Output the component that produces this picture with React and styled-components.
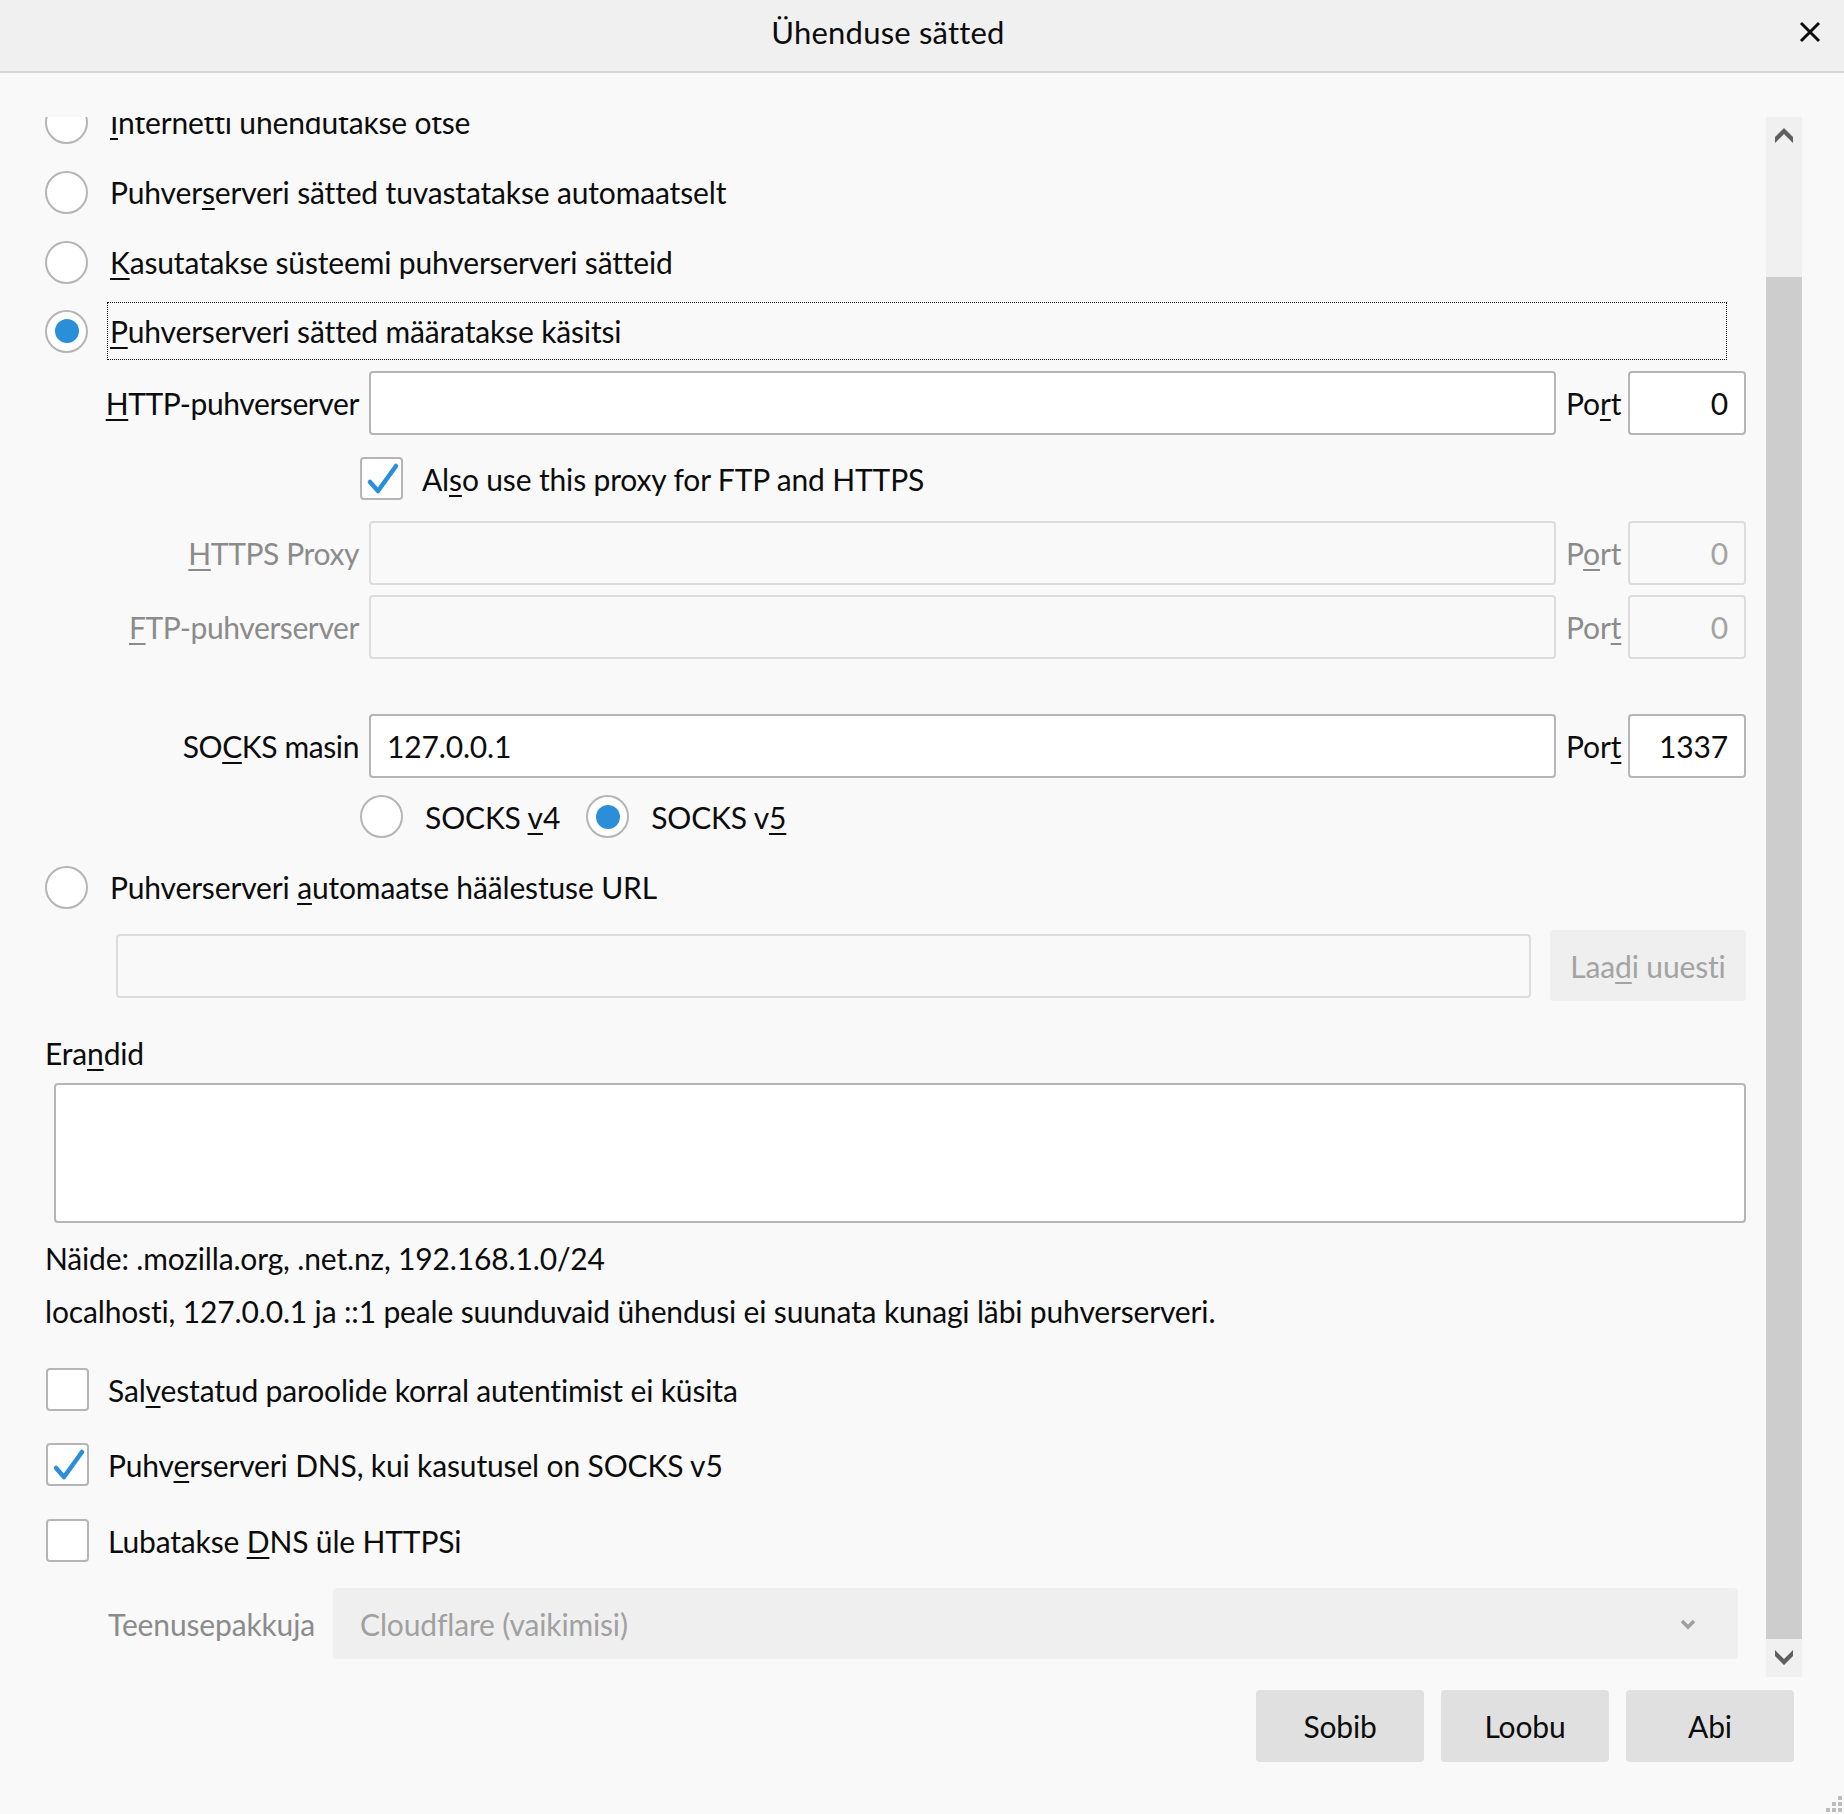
import React, { useLayoutEffect, useRef } from "react";
import styled, { createGlobalStyle } from "styled-components";

const GlobalStyle = createGlobalStyle`
  html, body {
    margin: 0;
    padding: 0;
    background: #f9f9f9;
  }
  body {
    font-family: "Lato", "Liberation Sans", sans-serif;
    color: #0c0c0d;
    letter-spacing: -0.15px;
  }
  u {
    text-decoration-thickness: 2px;
    text-underline-offset: 4px;
  }
`;

const Dialog = styled.div`
  width: 1844px;
  height: 1814px;
  display: flex;
  flex-direction: column;
  background: #f9f9f9;
  position: relative;
  overflow: hidden;
  font-size: 30px;
`;

const Header = styled.div`
  height: 73px;
  box-sizing: border-box;
  padding-bottom: 8px;
  flex: 0 0 auto;
  display: flex;
  align-items: center;
  background: #f0f0f0;
  border-bottom: 2px solid #d7d7db;
`;

const Title = styled.div`
  flex: 1;
  text-align: center;
  font-size: 31px;
  letter-spacing: 0.2px;
  color: #0c0c0d;
`;

const CloseButton = styled.div`
  width: 68px;
  display: flex;
  align-items: center;
  justify-content: center;
`;

const Body = styled.div`
  margin-top: 44px;
  height: 1560px;
  display: flex;
  padding-right: 42px;
`;

const Viewport = styled.div`
  flex: 1;
  overflow: hidden;
`;

const Content = styled.div`
  padding: 0 20px 40px 45px;
  display: flex;
  flex-direction: column;
`;

const ScrollBar = styled.div`
  width: 36px;
  display: flex;
  flex-direction: column;
  background: #f0f0f0;
`;

const ScrollTop = styled.div`
  height: 160px;
  display: flex;
  justify-content: center;
  padding-top: 10px;
  box-sizing: border-box;
`;

const Thumb = styled.div`
  flex: 1;
  background: #cdcdcd;
`;

const ScrollBottom = styled.div`
  height: 38px;
  display: flex;
  justify-content: center;
  align-items: center;
`;

const RadioRow = styled.div`
  display: flex;
  align-items: center;
  height: 58px;
  margin-top: ${(p) => p.$mt || 0}px;
`;

const RadioCircle = styled.span`
  width: 43px;
  height: 43px;
  flex: 0 0 43px;
  box-sizing: border-box;
  border-radius: 50%;
  border: 2px solid #b5b5b5;
  background: #fff;
  display: flex;
  align-items: center;
  justify-content: center;
  &::after {
    content: "";
    display: ${(p) => (p.$checked ? "block" : "none")};
    width: 24px;
    height: 24px;
    border-radius: 50%;
    background: #2a8fd8;
  }
`;

const RadioLabel = styled.span`
  margin-left: 19px;
  height: 58px;
  box-sizing: border-box;
  display: flex;
  align-items: center;
  padding: 0 2px;
  border: 1px dotted ${(p) => (p.$focused ? "#0c0c0d" : "transparent")};
  flex: ${(p) => (p.$focused ? 1 : "0 0 auto")};
  margin-right: ${(p) => (p.$focused ? 19 : 0)}px;
  white-space: nowrap;
`;

const ProxyGrid = styled.div`
  display: grid;
  grid-template-columns: 252px 1fr 52px 118px;
  column-gap: 10px;
  align-items: center;
  height: 64px;
  margin-left: 62px;
  margin-top: ${(p) => p.$mt || 0}px;
`;

const FieldLabel = styled.label`
  display: flex;
  justify-content: ${(p) => (p.$left ? "flex-start" : "flex-end")};
  letter-spacing: ${(p) => (p.$left ? "-0.15px" : "-0.4px")};
  white-space: nowrap;
  color: ${(p) => (p.$disabled ? "#8b8b8c" : "#0c0c0d")};
`;

const TextInput = styled.input`
  height: 64px;
  width: 100%;
  box-sizing: border-box;
  border: 2px solid ${(p) => (p.disabled ? "#dcdcdc" : "#b5b5b5")};
  border-radius: 4px;
  background: ${(p) => (p.disabled ? "#f9f9f9" : "#ffffff")};
  padding: 0 16px;
  font-family: "Lato", "Liberation Sans", sans-serif;
  font-size: 30px;
  letter-spacing: -0.15px;
  color: #0c0c0d;
  text-align: ${(p) => (p.$right ? "right" : "left")};
  outline: none;
  margin: 0;
  &:disabled {
    color: #a3a3a3;
    -webkit-text-fill-color: #a3a3a3;
  }
`;

const CheckRow = styled.div`
  display: flex;
  align-items: center;
  height: 43px;
  margin-top: ${(p) => p.$mt || 0}px;
  margin-left: ${(p) => p.$ml || 0}px;
  white-space: nowrap;
`;

const CheckBox = styled.span`
  width: 43px;
  height: 43px;
  flex: 0 0 43px;
  box-sizing: border-box;
  border: 2px solid #b5b5b5;
  border-radius: 4px;
  background: #fff;
  margin-right: 19px;
  display: flex;
`;

const SocksRow = styled.div`
  display: flex;
  align-items: center;
  gap: 26px;
  height: 43px;
  margin-top: 17px;
  margin-left: 315px;
`;

const SocksOption = styled.span`
  display: flex;
  align-items: center;
  gap: 22px;
  white-space: nowrap;
`;

const UrlRow = styled.div`
  display: flex;
  align-items: center;
  gap: 19px;
  height: 71px;
  margin-top: 14px;
  margin-left: 71px;
`;

const ReloadButton = styled.div`
  width: 196px;
  height: 71px;
  flex: 0 0 196px;
  border-radius: 4px;
  background: #efefef;
  color: #a3a3a3;
  display: flex;
  align-items: center;
  justify-content: center;
`;

const TextLine = styled.div`
  height: 40px;
  display: flex;
  align-items: center;
  margin-top: ${(p) => p.$mt || 0}px;
  white-space: nowrap;
`;

const TextArea = styled.div`
  height: 140px;
  margin-top: 10px;
  margin-left: 9px;
  box-sizing: border-box;
  border: 2px solid #b5b5b5;
  border-radius: 4px;
  background: #fff;
`;

const SelectRow = styled.div`
  display: grid;
  grid-template-columns: 225px 1fr;
  align-items: center;
  height: 71px;
  margin-top: 26px;
  margin-left: 63px;
  margin-right: 8px;
`;

const SelectBox = styled.div`
  height: 71px;
  border-radius: 4px;
  background: #efefef;
  color: #a0a0a0;
  display: flex;
  align-items: center;
  justify-content: space-between;
  padding: 0 42px 0 27px;
`;

const Footer = styled.div`
  display: flex;
  justify-content: flex-end;
  gap: 17px;
  margin-top: 13px;
  padding-right: 50px;
`;

const Button = styled.div`
  width: 168px;
  height: 72px;
  border-radius: 4px;
  background: #e0e0e0;
  display: flex;
  align-items: center;
  justify-content: center;
  font-size: 30px;
`;

const Grip = styled.svg`
  position: absolute;
  right: 0;
  bottom: 0;
`;

const Check = () => (
  <svg width="39" height="39" viewBox="0 0 39 39">
    <polyline
      points="8,23 16,32 34,7"
      fill="none"
      stroke="#2a8fd8"
      strokeWidth="4.5"
      strokeLinecap="round"
      strokeLinejoin="round"
    />
  </svg>
);

const ScrollArrow = ({ up }) => (
  <svg width="18" height="16" viewBox="0 0 18 16">
    <polygon
      points={up ? "0,10 9,1 18,10 18,16 9,7 0,16" : "0,0 9,9 18,0 18,6 9,15 0,6"}
      fill="#5f5f5f"
    />
  </svg>
);

const SelectArrow = () => (
  <svg width="16" height="12" viewBox="0 0 16 12">
    <polyline points="2,3 8,9 14,3" fill="none" stroke="#a0a0a0" strokeWidth="3.5" />
  </svg>
);

const Radio = ({ checked, focused, children, mt }) => (
  <RadioRow $mt={mt}>
    <RadioCircle $checked={checked} />
    <RadioLabel $focused={focused}>{children}</RadioLabel>
  </RadioRow>
);

const ProxyField = ({ label, value, port, disabled, mt, portLabel }) => (
  <ProxyGrid $mt={mt}>
    <FieldLabel $disabled={disabled}>
      <span>{label}</span>
    </FieldLabel>
    <TextInput readOnly disabled={disabled} defaultValue={value} />
    <FieldLabel $left $disabled={disabled}>
      <span>{portLabel}</span>
    </FieldLabel>
    <TextInput readOnly $right disabled={disabled} defaultValue={port} />
  </ProxyGrid>
);

export default function App() {
  const viewportRef = useRef(null);

  useLayoutEffect(() => {
    if (viewportRef.current) viewportRef.current.scrollTop = 24;
  }, []);

  return (
    <Dialog>
      <GlobalStyle />
      <Header>
        <Title>Ühenduse sätted</Title>
        <CloseButton>
          <svg width="22" height="22" viewBox="0 0 22 22">
            <path d="M2 2 L20 20 M20 2 L2 20" stroke="#0c0c0d" strokeWidth="3" />
          </svg>
        </CloseButton>
      </Header>

      <Body>
        <Viewport ref={viewportRef}>
          <Content>
            <Radio>
              <span>
                <u>I</u>nternetti ühendutakse otse
              </span>
            </Radio>
            <Radio mt={12}>
              <span>
                Puhver<u>s</u>erveri sätted tuvastatakse automaatselt
              </span>
            </Radio>
            <Radio mt={12}>
              <span>
                <u>K</u>asutatakse süsteemi puhverserveri sätteid
              </span>
            </Radio>
            <Radio mt={11} checked focused>
              <span>
                <u>P</u>uhverserveri sätted määratakse käsitsi
              </span>
            </Radio>

            <ProxyField
              mt={11}
              label={
                <>
                  <u>H</u>TTP-puhverserver
                </>
              }
              portLabel={
                <>
                  Po<u>r</u>t
                </>
              }
              value=""
              port="0"
            />

            <CheckRow $mt={22} $ml={315}>
              <CheckBox>
                <Check />
              </CheckBox>
              <span>
                Al<u>s</u>o use this proxy for FTP and HTTPS
              </span>
            </CheckRow>

            <ProxyField
              mt={21}
              disabled
              label={
                <>
                  <u>H</u>TTPS Proxy
                </>
              }
              portLabel={
                <>
                  P<u>o</u>rt
                </>
              }
              value=""
              port="0"
            />
            <ProxyField
              mt={10}
              disabled
              label={
                <>
                  <u>F</u>TP-puhverserver
                </>
              }
              portLabel={
                <>
                  Por<u>t</u>
                </>
              }
              value=""
              port="0"
            />
            <ProxyField
              mt={55}
              label={
                <>
                  SO<u>C</u>KS masin
                </>
              }
              portLabel={
                <>
                  Por<u>t</u>
                </>
              }
              value="127.0.0.1"
              port="1337"
            />

            <SocksRow>
              <SocksOption>
                <RadioCircle />
                <span>
                  SOCKS <u>v</u>4
                </span>
              </SocksOption>
              <SocksOption>
                <RadioCircle $checked />
                <span>
                  SOCKS v<u>5</u>
                </span>
              </SocksOption>
            </SocksRow>

            <Radio mt={20}>
              <span>
                Puhverserveri <u>a</u>utomaatse häälestuse URL
              </span>
            </Radio>

            <UrlRow>
              <TextInput readOnly disabled defaultValue="" />
              <ReloadButton>
                <span>
                  Laa<u>d</u>i uuesti
                </span>
              </ReloadButton>
            </UrlRow>

            <TextLine $mt={32}>
              <span>
                Era<u>n</u>did
              </span>
            </TextLine>
            <TextArea />
            <TextLine $mt={15}>Näide: .mozilla.org, .net.nz, 192.168.1.0/24</TextLine>
            <TextLine $mt={13}>
              localhosti, 127.0.0.1 ja ::1 peale suunduvaid ühendusi ei suunata kunagi läbi
              puhverserveri.
            </TextLine>

            <CheckRow $mt={37} $ml={1}>
              <CheckBox />
              <span>
                Sal<u>v</u>estatud paroolide korral autentimist ei küsita
              </span>
            </CheckRow>
            <CheckRow $mt={32} $ml={1}>
              <CheckBox>
                <Check />
              </CheckBox>
              <span>
                Puhv<u>e</u>rserveri DNS, kui kasutusel on SOCKS v5
              </span>
            </CheckRow>
            <CheckRow $mt={33} $ml={1}>
              <CheckBox />
              <span>
                Lubatakse <u>D</u>NS üle HTTPSi
              </span>
            </CheckRow>

            <SelectRow>
              <FieldLabel $left $disabled>
                Teenusepakkuja
              </FieldLabel>
              <SelectBox>
                <span>Cloudflare (vaikimisi)</span>
                <SelectArrow />
              </SelectBox>
            </SelectRow>
          </Content>
        </Viewport>

        <ScrollBar>
          <ScrollTop>
            <ScrollArrow up />
          </ScrollTop>
          <Thumb />
          <ScrollBottom>
            <ScrollArrow />
          </ScrollBottom>
        </ScrollBar>
      </Body>

      <Footer>
        <Button>Sobib</Button>
        <Button>Loobu</Button>
        <Button>Abi</Button>
      </Footer>

      <Grip width="20" height="20" viewBox="0 0 20 20">
        <rect x="14" y="2" width="4" height="4" fill="#bdbdbd" />
        <rect x="8" y="8" width="4" height="4" fill="#bdbdbd" />
        <rect x="14" y="8" width="4" height="4" fill="#bdbdbd" />
        <rect x="2" y="14" width="4" height="4" fill="#bdbdbd" />
        <rect x="8" y="14" width="4" height="4" fill="#bdbdbd" />
        <rect x="14" y="14" width="4" height="4" fill="#bdbdbd" />
      </Grip>
    </Dialog>
  );
}
